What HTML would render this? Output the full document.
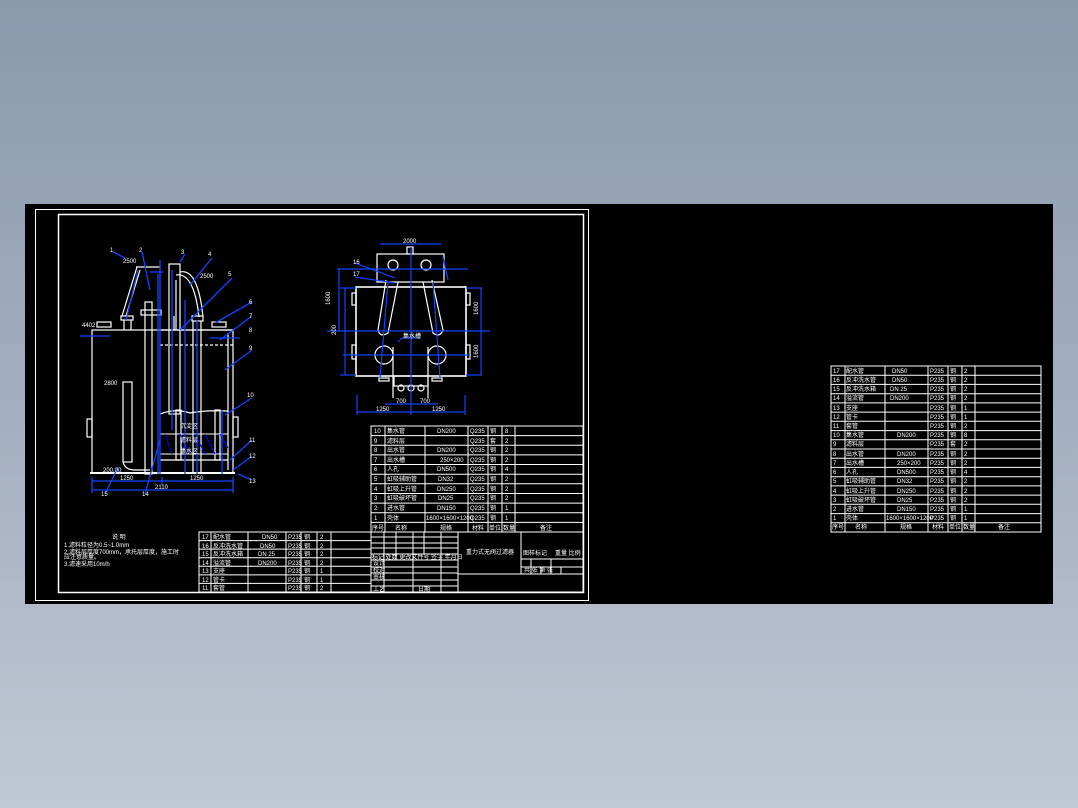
<!DOCTYPE html>
<html><head><meta charset="utf-8"><style>
html,body{margin:0;padding:0;width:1078px;height:808px;overflow:hidden}
body{background:linear-gradient(#8999ae 0%,#a3aec0 50%,#c1c8d5 100%)}
svg{position:absolute;left:0;top:0}
text{font-family:"Liberation Sans","Noto Sans CJK SC",sans-serif;fill:#fff;font-size:6px}
</style></head><body>
<svg width="1078" height="808" viewBox="0 0 1078 808">
<rect x="25" y="204" width="1028" height="400" fill="#000"/>
<g fill="none" stroke="#fff" stroke-width="1">
<rect x="35.5" y="209.5" width="553" height="391"/>
<rect x="58.5" y="214.5" width="525" height="378" stroke-width="1.5"/>
</g>
<!-- elevation view -->
<g fill="none" stroke="#fff" stroke-width="1.2">
<rect x="92" y="330" width="141" height="143"/>
<line x1="228" y1="333" x2="228" y2="470"/>
<line x1="90" y1="473" x2="235" y2="473" stroke-width="2"/>
<line x1="122" y1="316" x2="137" y2="267"/><line x1="126" y1="316" x2="140" y2="270"/>
<line x1="136" y1="267" x2="160" y2="267"/>
<rect x="121" y="316" width="12" height="4"/>
<line x1="124" y1="320" x2="124" y2="330"/><line x1="131" y1="320" x2="131" y2="330"/>
<rect x="145" y="302" width="7" height="172"/>
<rect x="141" y="310" width="20" height="5"/>
<rect x="169" y="264" width="11" height="150"/>
<path d="M180 272 Q198 268 203 317"/><path d="M176 275 Q194 272 199 317"/>
<line x1="176" y1="280" x2="176" y2="330"/>
<rect x="192" y="316" width="11" height="5"/>
<line x1="193" y1="321" x2="193" y2="474"/><line x1="201" y1="321" x2="201" y2="474"/>
<path d="M160 330 L233 330"/>
<path d="M160 345 L233 345" stroke-dasharray="3 2"/>
<rect x="97" y="322" width="14" height="5"/><rect x="212" y="322" width="14" height="5"/>
<rect x="123" y="382" width="9" height="80"/>
<path d="M123 462 Q125 470 135 470 L150 470"/>
<rect x="87" y="419" width="5" height="18"/><rect x="233" y="417" width="5" height="20"/>
<path d="M160 414 Q175 408 190 413 Q205 410 228 411"/>
<rect x="160" y="434" width="68" height="20" stroke-width="1"/>
<line x1="160" y1="460" x2="228" y2="460"/>
<rect x="176" y="410" width="5" height="50"/><rect x="215" y="410" width="5" height="50"/>
<line x1="174" y1="316" x2="174" y2="330"/>
</g>
<g stroke="#00f" stroke-width="1" fill="none">
<path d="M165 434 L172 454 M180 434 L190 454 M195 434 L205 454 M205 434 L215 454 M220 434 L228 448"/>
</g>
<g stroke="#14f" stroke-width="1.3" fill="none">
<line x1="92" y1="481" x2="233" y2="481"/><line x1="92" y1="490" x2="233" y2="490"/>
<line x1="92" y1="477" x2="92" y2="493"/><line x1="233" y1="477" x2="233" y2="493"/><line x1="162" y1="477" x2="162" y2="485"/>
<line x1="138" y1="270" x2="126" y2="320"/><line x1="150" y1="272" x2="163" y2="272"/>
<line x1="158" y1="274" x2="158" y2="474"/><line x1="160" y1="260" x2="160" y2="474"/>
<line x1="172" y1="270" x2="172" y2="430"/><line x1="197" y1="320" x2="197" y2="474"/>
<line x1="185" y1="300" x2="185" y2="474"/><line x1="222" y1="410" x2="222" y2="474"/>
<line x1="80" y1="336" x2="110" y2="336"/><line x1="210" y1="338" x2="240" y2="338"/>
<path d="M113 252 L125 258 M142 252 L150 290 M185 254 L180 262 M212 258 L190 285 M232 278 L180 330 M252 302 L215 323 M252 316 L220 340 M252 350 L225 370 M252 398 L225 415 M252 440 L230 460 M252 456 L233 470 M252 480 L238 474 M105 494 L118 467 M145 494 L160 440"/>
</g>
<g font-size="5">
<text x="110" y="252">1</text><text x="139" y="252">2</text><text x="181" y="254">3</text><text x="208" y="256">4</text><text x="228" y="276">5</text><text x="249" y="304">6</text><text x="249" y="318">7</text><text x="249" y="332">8</text><text x="249" y="350">9</text><text x="247" y="397">10</text><text x="249" y="442">11</text><text x="249" y="458">12</text><text x="249" y="483">13</text><text x="142" y="496">14</text><text x="101" y="496">15</text>
<text x="123" y="263">2500</text><text x="200" y="278">2500</text><text x="82" y="327">4402</text><text x="104" y="385">2800</text><text x="103" y="472">200.00</text><text x="120" y="480">1250</text><text x="190" y="480">1250</text><text x="155" y="489">2110</text>
<text x="180" y="428">沉淀区</text><text x="180" y="442">滤料层</text><text x="180" y="453">集水区</text>
</g>
<!-- plan view -->
<g fill="none" stroke="#fff" stroke-width="1.2">
<rect x="356" y="287" width="110" height="89" stroke-width="1.6"/>
<rect x="377" y="254" width="67" height="28"/>
<rect x="407" y="247" width="6" height="7"/>
<rect x="352" y="293" width="4" height="12"/><rect x="466" y="293" width="4" height="12"/>
<rect x="352" y="345" width="4" height="14"/><rect x="466" y="345" width="4" height="14"/>
<circle cx="384" cy="355" r="9"/><circle cx="437" cy="355" r="9"/>
<path d="M386 280 L378 330 Q380 338 388 333 L398 282"/>
<path d="M432 280 L443 330 Q440 338 433 333 L423 282"/>
<circle cx="393" cy="265" r="5"/><circle cx="426" cy="265" r="5"/>
<rect x="394" y="376" width="34" height="10"/>
<circle cx="401" cy="388" r="3"/><circle cx="411" cy="388" r="3"/><circle cx="421" cy="388" r="3"/>
<line x1="393" y1="347" x2="393" y2="398"/><line x1="428" y1="347" x2="428" y2="398"/>
<rect x="379" y="378" width="10" height="3"/><rect x="432" y="378" width="10" height="3"/>
</g>
<g stroke="#14f" stroke-width="1.2" fill="none">
<line x1="380" y1="244" x2="441" y2="244"/>
<line x1="411" y1="247" x2="411" y2="415"/>
<line x1="327" y1="331" x2="490" y2="331"/>
<line x1="337" y1="269" x2="468" y2="269"/>
<line x1="339" y1="269" x2="339" y2="331"/>
<line x1="340" y1="288" x2="356" y2="288"/><line x1="340" y1="375" x2="356" y2="375"/><line x1="345" y1="288" x2="345" y2="375"/>
<line x1="466" y1="288" x2="482" y2="288"/><line x1="466" y1="375" x2="482" y2="375"/><line x1="481" y1="288" x2="481" y2="375"/>
<line x1="443" y1="257" x2="448" y2="280"/>
<line x1="357" y1="412" x2="465" y2="412"/><line x1="357" y1="395" x2="357" y2="415"/><line x1="465" y1="395" x2="465" y2="415"/>
<line x1="385" y1="404" x2="438" y2="404"/>
<line x1="343" y1="355" x2="470" y2="355"/>
<path d="M355 263 L395 278 M355 277 L395 283 M398 342 L402 338 L420 338"/>
<line x1="388" y1="282" x2="380" y2="378"/><line x1="433" y1="282" x2="440" y2="378"/>
</g>
<g font-size="5">
<text x="403" y="243">2000</text><text x="353" y="264">16</text><text x="353" y="276">17</text>
<text x="403" y="338" font-size="6">集水槽</text>
<text x="376" y="411">1250</text><text x="432" y="411">1250</text><text x="396" y="403">700</text><text x="420" y="403">700</text>
<text x="330" y="305" transform="rotate(-90 330 305)">1600</text><text x="336" y="335" transform="rotate(-90 336 335)">200</text>
<text x="478" y="315" transform="rotate(-90 478 315)">1600</text><text x="478" y="358" transform="rotate(-90 478 358)">1600</text>
</g>
<!-- main parts table -->
<g stroke="#fff" stroke-width="1" fill="none">
<rect x="371" y="426" width="212" height="106"/>
<path d="M371 435.6H583M371 445.3H583M371 454.9H583M371 464.5H583M371 474.2H583M371 483.8H583M371 493.5H583M371 503.1H583M371 512.7H583M371 522.4H583"/>
<path d="M385 426V532M425 426V532M468 426V532M488 426V532M502 426V532M515 426V532"/>
<rect x="199" y="532" width="172" height="60"/>
<path d="M199 540.6H371M199 549.1H371M199 557.7H371M199 566.3H371M199 574.9H371M199 583.4H371"/>
<path d="M211 532V592M248 532V592M286 532V592M301 532V592M317 532V592M331 532V592"/>
<rect x="371" y="532" width="212" height="60"/>
<path d="M458 532V592M521 532V574M371 537H458M371 543H458M371 548H458M371 554H458M371 560H458M371 567H458M371 573H458M371 580H458M371 586H458"/>
<path d="M384 532V592M396 532V560M413 532V592M424 532V554M441 532V592M458 574H583M521 559H583M521 567H583"/>
<path d="M531 559V574M541 567V574M551 559V574M561 567V574"/>
</g>
<g font-size="5.2">
<text x="374" y="433">10</text><text x="387" y="433">集水管</text><text x="437" y="433">DN200</text><text x="470" y="433">Q235</text><text x="490" y="433">钢</text><text x="505" y="433">8</text>
<text x="374" y="443">9</text><text x="387" y="443">滤料层</text><text x="470" y="443">Q235</text><text x="490" y="443">套</text><text x="505" y="443">2</text>
<text x="374" y="452">8</text><text x="387" y="452">出水管</text><text x="437" y="452">DN200</text><text x="470" y="452">Q235</text><text x="490" y="452">钢</text><text x="505" y="452">2</text>
<text x="374" y="462">7</text><text x="387" y="462">出水槽</text><text x="440" y="462">250×200</text><text x="470" y="462">Q235</text><text x="490" y="462">钢</text><text x="505" y="462">2</text>
<text x="374" y="471">6</text><text x="387" y="471">人孔</text><text x="437" y="471">DN500</text><text x="470" y="471">Q235</text><text x="490" y="471">钢</text><text x="505" y="471">4</text>
<text x="374" y="481">5</text><text x="387" y="481">虹吸辅助管</text><text x="438" y="481">DN32</text><text x="470" y="481">Q235</text><text x="490" y="481">钢</text><text x="505" y="481">2</text>
<text x="374" y="491">4</text><text x="387" y="491">虹吸上升管</text><text x="437" y="491">DN250</text><text x="470" y="491">Q235</text><text x="490" y="491">钢</text><text x="505" y="491">2</text>
<text x="374" y="500">3</text><text x="387" y="500">虹吸破坏管</text><text x="438" y="500">DN25</text><text x="470" y="500">Q235</text><text x="490" y="500">钢</text><text x="505" y="500">2</text>
<text x="374" y="510">2</text><text x="387" y="510">进水管</text><text x="437" y="510">DN150</text><text x="470" y="510">Q235</text><text x="490" y="510">钢</text><text x="505" y="510">1</text>
<text x="374" y="520">1</text><text x="387" y="520">壳体</text><text x="426" y="520">1600×1600×1200</text><text x="470" y="520">Q235</text><text x="490" y="520">钢</text><text x="505" y="520">1</text>
<text x="372" y="530">序号</text><text x="395" y="530">名称</text><text x="440" y="530">规格</text><text x="472" y="530">材料</text><text x="489" y="530">单位</text><text x="503" y="530">数量</text><text x="540" y="530">备注</text>
<text x="202" y="539">17</text><text x="213" y="539">配水管</text><text x="262" y="539">DN50</text><text x="288" y="539">P235</text><text x="304" y="539">钢</text><text x="320" y="539">2</text>
<text x="202" y="548">16</text><text x="213" y="548">反冲洗水管</text><text x="260" y="548">DN50</text><text x="288" y="548">P235</text><text x="304" y="548">钢</text><text x="320" y="548">2</text>
<text x="202" y="556">15</text><text x="213" y="556">反冲洗水箱</text><text x="258" y="556">DN 25</text><text x="288" y="556">P235</text><text x="304" y="556">钢</text><text x="320" y="556">2</text>
<text x="202" y="565">14</text><text x="213" y="565">溢流管</text><text x="258" y="565">DN200</text><text x="288" y="565">P235</text><text x="304" y="565">钢</text><text x="320" y="565">2</text>
<text x="202" y="573">13</text><text x="213" y="573">支座</text><text x="288" y="573">P235</text><text x="304" y="573">钢</text><text x="320" y="573">1</text>
<text x="202" y="582">12</text><text x="213" y="582">管卡</text><text x="288" y="582">P235</text><text x="304" y="582">钢</text><text x="320" y="582">1</text>
<text x="202" y="590">11</text><text x="213" y="590">套管</text><text x="288" y="590">P235</text><text x="304" y="590">钢</text><text x="320" y="590">2</text>
<text x="372" y="559">标记 处数 更改文件号 签字 年月日</text><text x="373" y="565">设计</text><text x="373" y="572">校对</text><text x="373" y="579">审核</text><text x="373" y="591">工艺</text><text x="418" y="591">日期</text>
<text x="466" y="554" font-size="5.5">重力式无阀过滤器</text><text x="523" y="555">图样标记</text><text x="555" y="555">重量 比例</text>
<text x="524" y="572">共 张 第 张</text>
<text x="112" y="539" font-size="6">说 明</text>
<text x="64" y="547" font-size="4.8">1.滤料粒径为0.5~1.0mm</text>
<text x="64" y="554" font-size="4.8">2.滤料层厚度700mm，承托层厚度，施工时</text>
<text x="64" y="559" font-size="4.8">应注意质量。</text>
<text x="64" y="566" font-size="4.8">3.滤速采用10m/h</text>
</g>
<!-- right table -->
<g stroke="#fff" stroke-width="1" fill="none">
<rect x="831" y="366" width="210" height="166"/>
<path d="M831 375.2H1041M831 384.4H1041M831 393.7H1041M831 402.9H1041M831 412.1H1041M831 421.3H1041M831 430.6H1041M831 439.8H1041M831 449H1041M831 458.2H1041M831 467.4H1041M831 476.7H1041M831 485.9H1041M831 495.1H1041M831 504.3H1041M831 513.6H1041M831 522.8H1041"/>
<path d="M845 366V532M885 366V532M928 366V532M948 366V532M962 366V532M975 366V532"/>
</g>
<g font-size="5">
<text x="833" y="373">17</text><text x="846" y="373">配水管</text><text x="892" y="373">DN50</text><text x="930" y="373">P235</text><text x="950" y="373">钢</text><text x="964" y="373">2</text>
<text x="833" y="382">16</text><text x="846" y="382">反冲洗水管</text><text x="892" y="382">DN50</text><text x="930" y="382">P235</text><text x="950" y="382">钢</text><text x="964" y="382">2</text>
<text x="833" y="391">15</text><text x="846" y="391">反冲洗水箱</text><text x="890" y="391">DN 25</text><text x="930" y="391">P235</text><text x="950" y="391">钢</text><text x="964" y="391">2</text>
<text x="833" y="400">14</text><text x="846" y="400">溢流管</text><text x="890" y="400">DN200</text><text x="930" y="400">P235</text><text x="950" y="400">钢</text><text x="964" y="400">2</text>
<text x="833" y="410">13</text><text x="846" y="410">支座</text><text x="930" y="410">P235</text><text x="950" y="410">钢</text><text x="964" y="410">1</text>
<text x="833" y="419">12</text><text x="846" y="419">管卡</text><text x="930" y="419">P235</text><text x="950" y="419">钢</text><text x="964" y="419">1</text>
<text x="833" y="428">11</text><text x="846" y="428">套管</text><text x="930" y="428">P235</text><text x="950" y="428">钢</text><text x="964" y="428">2</text>
<text x="833" y="437">10</text><text x="846" y="437">集水管</text><text x="897" y="437">DN200</text><text x="930" y="437">P235</text><text x="950" y="437">钢</text><text x="964" y="437">8</text>
<text x="833" y="446">9</text><text x="846" y="446">滤料层</text><text x="930" y="446">P235</text><text x="950" y="446">套</text><text x="964" y="446">2</text>
<text x="833" y="456">8</text><text x="846" y="456">出水管</text><text x="897" y="456">DN200</text><text x="930" y="456">P235</text><text x="950" y="456">钢</text><text x="964" y="456">2</text>
<text x="833" y="465">7</text><text x="846" y="465">出水槽</text><text x="897" y="465">250×200</text><text x="930" y="465">P235</text><text x="950" y="465">钢</text><text x="964" y="465">2</text>
<text x="833" y="474">6</text><text x="846" y="474">人孔</text><text x="897" y="474">DN500</text><text x="930" y="474">P235</text><text x="950" y="474">钢</text><text x="964" y="474">4</text>
<text x="833" y="483">5</text><text x="846" y="483">虹吸辅助管</text><text x="897" y="483">DN32</text><text x="930" y="483">P235</text><text x="950" y="483">钢</text><text x="964" y="483">2</text>
<text x="833" y="493">4</text><text x="846" y="493">虹吸上升管</text><text x="897" y="493">DN250</text><text x="930" y="493">P235</text><text x="950" y="493">钢</text><text x="964" y="493">2</text>
<text x="833" y="502">3</text><text x="846" y="502">虹吸破坏管</text><text x="897" y="502">DN25</text><text x="930" y="502">P235</text><text x="950" y="502">钢</text><text x="964" y="502">2</text>
<text x="833" y="511">2</text><text x="846" y="511">进水管</text><text x="897" y="511">DN150</text><text x="930" y="511">P235</text><text x="950" y="511">钢</text><text x="964" y="511">1</text>
<text x="833" y="520">1</text><text x="846" y="520">壳体</text><text x="886" y="520">1600×1600×1200</text><text x="930" y="520">P235</text><text x="950" y="520">钢</text><text x="964" y="520">1</text>
<text x="832" y="529">序号</text><text x="855" y="529">名称</text><text x="900" y="529">规格</text><text x="932" y="529">材料</text><text x="949" y="529">单位</text><text x="963" y="529">数量</text><text x="998" y="529">备注</text>
</g>
</svg>
</body></html>
